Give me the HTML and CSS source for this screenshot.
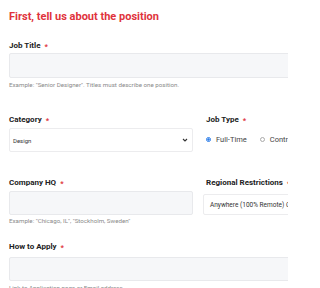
FILE: index.html
```html
<!DOCTYPE html>
<html>
<head>
<meta charset="utf-8">
<link rel="stylesheet" href="styles.css">
</head>
<body>
<div class="page">
  <h2 class="title">First, tell us about the position</h2>

  <div class="field full">
    <div class="label">Job Title <span class="req">*</span></div>
    <div class="input"></div>
    <div class="help">Example: "Senior Designer". Titles must describe one position.</div>
  </div>

  <div class="row r1">
    <div class="field left">
      <div class="label">Category <span class="req">*</span></div>
      <div class="select"><span>Design</span><svg class="caret" width="6" height="4" viewBox="0 0 6 4"><path d="M1 1 L3 3 L5 1" fill="none" stroke="#333" stroke-width="1.1"/></svg></div>
    </div>
    <div class="field right">
      <div class="label">Job Type <span class="req">*</span></div>
      <div class="radios">
        <span class="radio on"></span><span class="rtext">Full-Time</span>
        <span class="radio"></span><span class="rtext">Contract</span>
      </div>
    </div>
  </div>

  <div class="row r2">
    <div class="field left">
      <div class="label">Company HQ <span class="req">*</span></div>
      <div class="input short"></div>
      <div class="help">Example: "Chicago, IL", "Stockholm, Sweden"</div>
    </div>
    <div class="field right">
      <div class="label">Regional Restrictions <span class="req">*</span></div>
      <div class="select wide"><span>Anywhere (100% Remote) Only</span></div>
    </div>
  </div>

  <div class="field full last">
    <div class="label">How to Apply <span class="req">*</span></div>
    <div class="input"></div>
    <div class="help">Link to Application page or Email address.</div>
  </div>
</div>
</body>
</html>
```

FILE: styles.css
```css
html, body {
  margin: 0;
  padding: 0;
  background: #fff;
}
html {
  width: 288px;
  height: 288px;
  overflow: hidden;
}
body {
  width: 288px;
  height: 288px;
  overflow: hidden;
  font-family: Roboto, "Noto Sans", sans-serif;
  color: #222;
}
.page {
  padding: 9px 0 0 9px;
}
.title {
  margin: 0;
  font-size: 11px;
  font-weight: 700;
  color: #e0333c;
  line-height: 16px;
}
.field.full {
  margin-top: 15px;
  width: 300px;
}
.field.full.last {
  margin-top: 16px;
}
.label {
  font-size: 8px;
  font-weight: 700;
  color: #222;
  line-height: 11px;
  height: 11px;
  white-space: nowrap;
}
.req {
  color: #e0333c;
  margin-left: 2px;
  font-size: 7.5px;
  line-height: 0;
  position: relative;
  top: 1px;
}
.input {
  margin-top: 2px;
  height: 25px;
  box-sizing: border-box;
  background: #f6f7f9;
  border: 1px solid #e8e9ec;
  border-radius: 2px;
}
.last .input {
  margin-top: 5px;
  height: 24px;
}
.input.short {
  width: 184px;
  height: 24px;
  margin-top: 3px;
}
.help {
  margin-top: 3px;
  font-size: 6.2px;
  color: #8a8a8a;
  line-height: 8px;
  white-space: nowrap;
}
.left .help {
  margin-top: 2px;
}
.row {
  display: flex;
  gap: 10px;
  width: 420px;
}
.row.r1 {
  margin-top: 25px;
}
.row.r2 {
  margin-top: 25px;
}
.field.left {
  width: 184px;
  flex: none;
}
.field.right {
  flex: none;
  width: 220px;
}
.field.right .label {
  margin-left: 3px;
}
.select {
  margin-top: 3px;
  height: 24px;
  border: 1px solid #ececee;
  border-radius: 2px;
  background: #fff;
  display: flex;
  align-items: center;
  justify-content: space-between;
  padding: 0 4px 0 3px;
  box-sizing: border-box;
  font-size: 6px;
  color: #333;
}
.select.wide {
  margin-top: 6px;
  height: 21px;
  padding-left: 6px;
  font-size: 6.5px;
}
.caret {
  flex: none;
}
.radios {
  margin-top: 10px;
  margin-left: 3px;
  display: flex;
  align-items: center;
  font-size: 7.5px;
  line-height: 9px;
  color: #444;
}
.radio {
  width: 5px;
  height: 5px;
  border-radius: 50%;
  border: 1px solid #aaa;
  box-sizing: border-box;
  margin-right: 5px;
}
.radio.on {
  border: 1px solid #2b7de9;
  background: radial-gradient(circle, #2b7de9 45%, #fff 55%);
}
.rtext {
  margin-right: 13px;
}
```
